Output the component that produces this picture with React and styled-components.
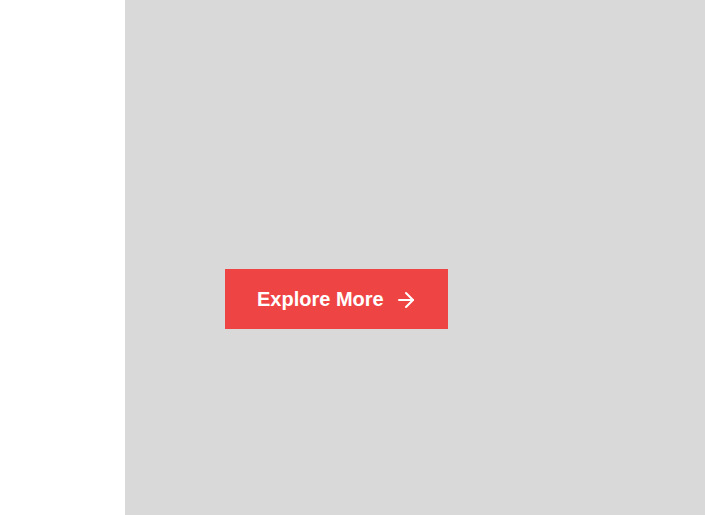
import styled, { createGlobalStyle } from "styled-components";

const GlobalStyle = createGlobalStyle`
  body {
    margin: 0;
    font-family: "Liberation Sans", Arial, sans-serif;
  }
`;

const App = () => {
  // render-----------------------------------------------
  return (
    <>
      <GlobalStyle />
      <Page>
        <Aside />
        <Panel>
          <ExploreButton>
            Explore More
            <svg width="24" height="24" viewBox="0 0 24 24" fill="none" stroke="currentColor" strokeWidth="2" strokeLinecap="round" strokeLinejoin="round">
              <path d="M5 12h14" />
              <path d="M12 5l7 7-7 7" />
            </svg>
          </ExploreButton>
        </Panel>
      </Page>
    </>
  );
};

export default App;

const Page = styled.div`
  display: flex;
  height: 515px;
  background: #ffffff;
`;

const Aside = styled.div`
  width: 125px;
  flex-shrink: 0;
`;

const Panel = styled.div`
  flex: 1;
  background: #d9d9d9;
  padding: 269px 0 0 100px;
`;

const ExploreButton = styled.button`
  display: flex;
  align-items: center;
  gap: 10px;
  height: 60px;
  padding: 0 30px 0 32px;
  border: none;
  background: #ef4444;
  color: #ffffff;
  font-family: "Liberation Sans", Arial, sans-serif;
  font-size: 20px;
  font-weight: 700;
  cursor: pointer;

  svg {
    margin-top: 2px;
  }
`;
